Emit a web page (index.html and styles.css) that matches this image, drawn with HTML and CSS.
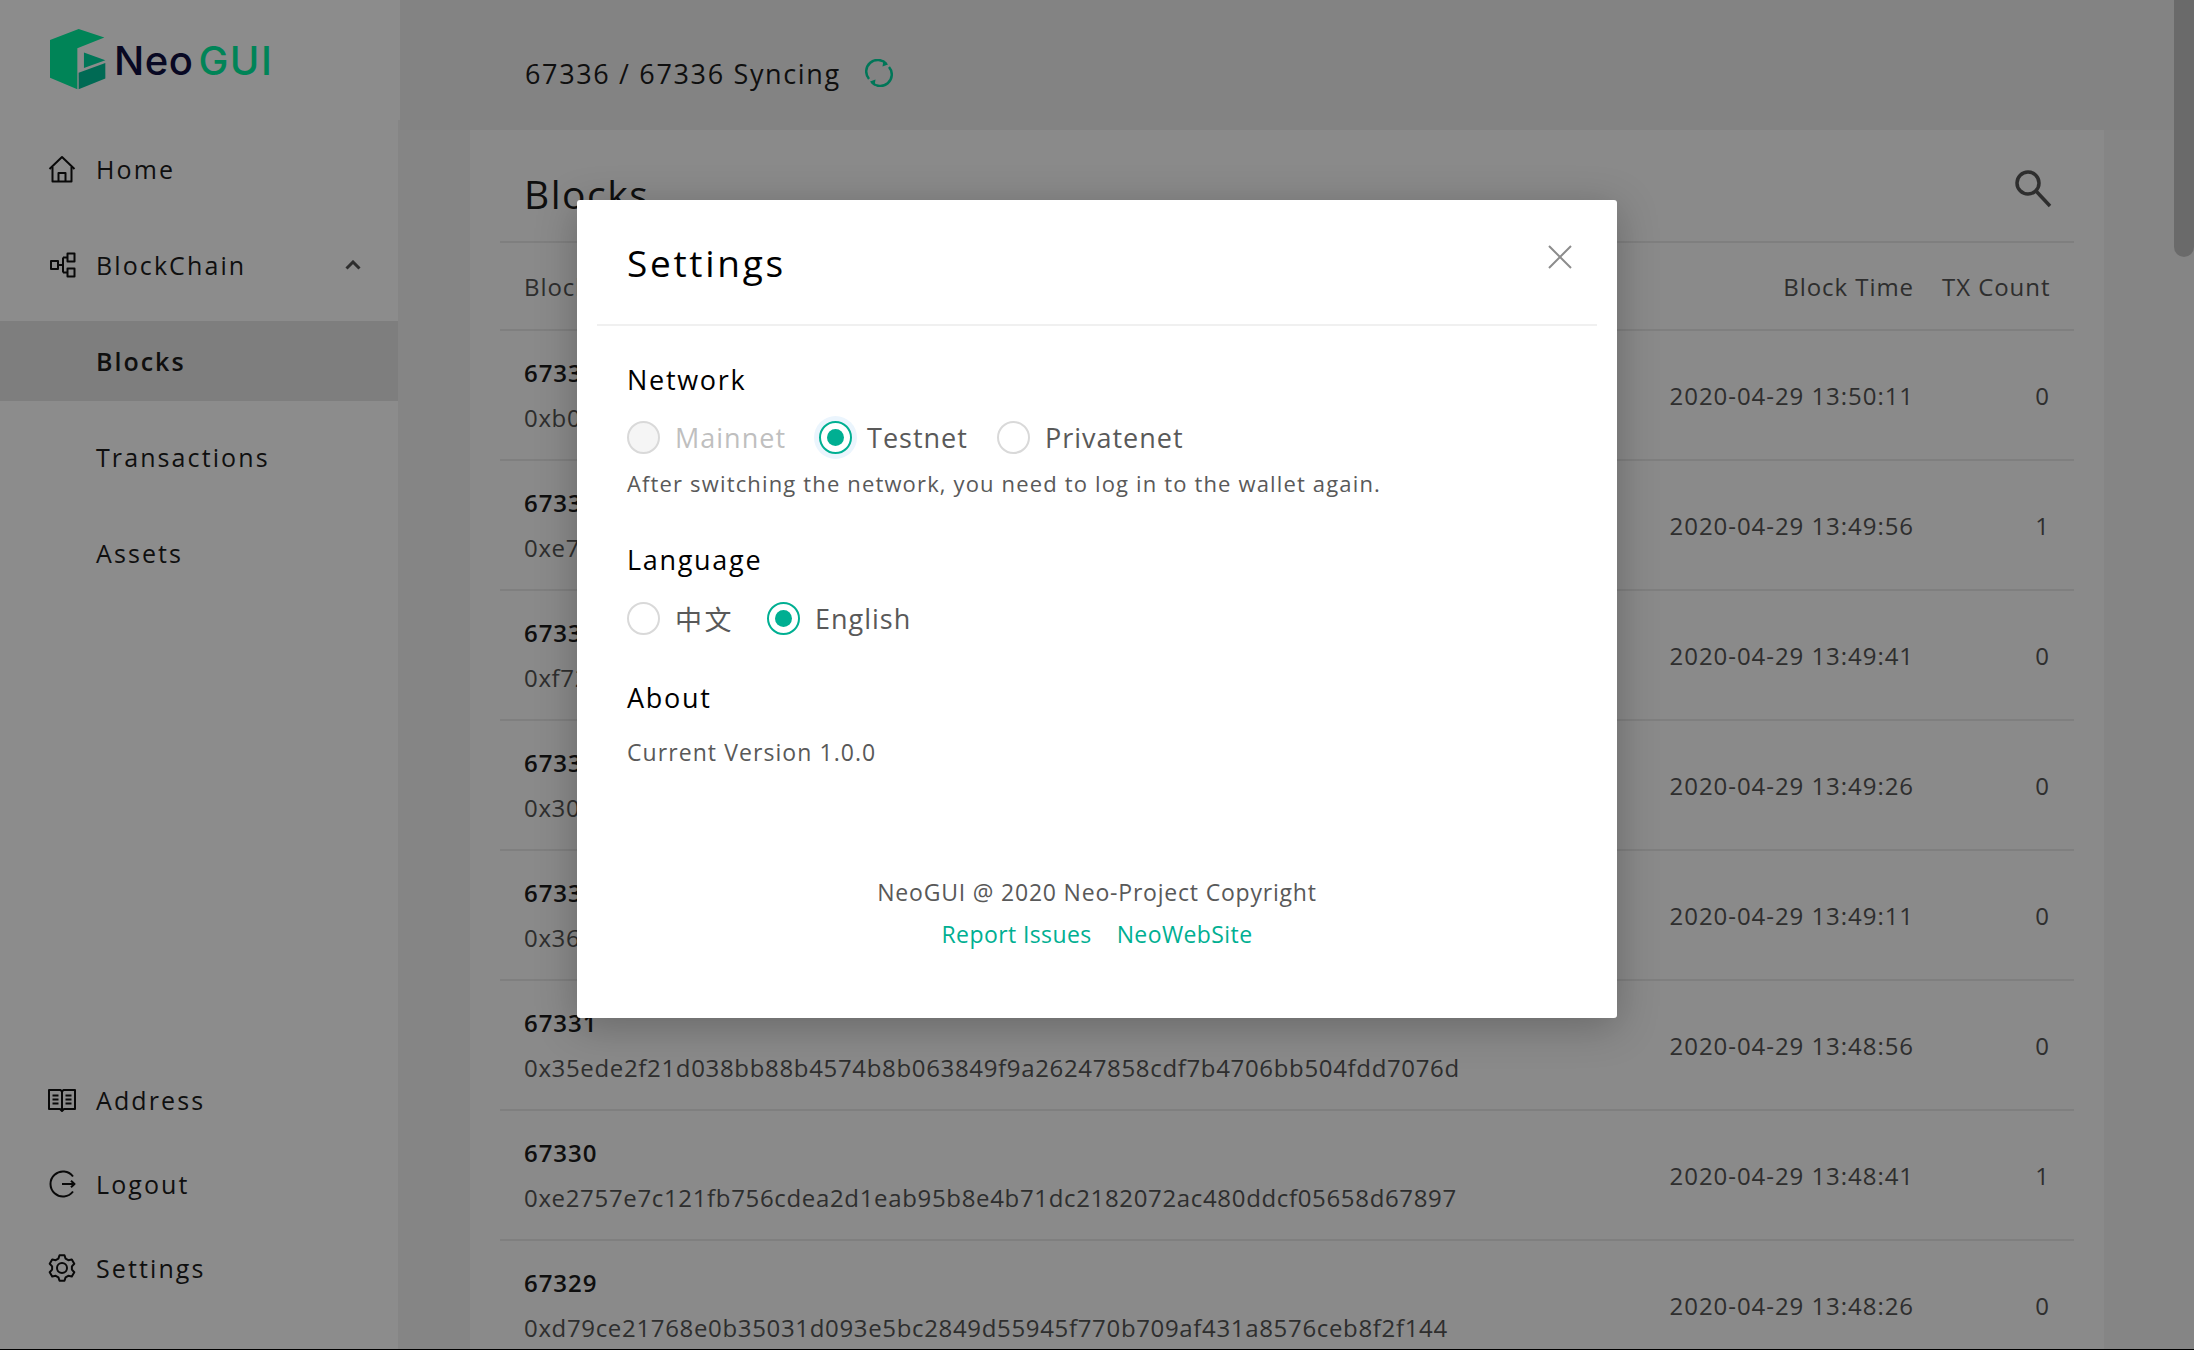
FILE: index.html
```html
<!DOCTYPE html>
<html lang="en">
<head>
  <meta charset="UTF-8">
  <title>NeoGUI</title>
  <link rel="stylesheet" href="styles.css">
</head>
<body>
  <div class="app">

    <div class="sidebar">
      <div class="logo">
        <svg class="logo-mark" viewBox="60 42 170 185">
          <path fill="#00f09f" d="M60 75 147 42 225 68 143 100V225L60 190Z"/>
          <path fill="#00d8a0" d="M163 113 228 137 163 160Z"/>
          <path fill="#00c29a" d="M147 175 228 145V192L147 225Z"/>
        </svg>
        <span class="logo-neo">Neo</span><span class="logo-gui">GUI</span>
      </div>

      <div class="menu">
        <div class="menu-item">
          <svg class="menu-icon" viewBox="0 0 28 28"><path d="M1.5 14 14 2 26.500 14"/><path d="M4.500 12V26.500H23.500V12M10.500 26.500V18H17.500V26.500"/></svg>
          Home
        </div>
        <div class="menu-item">
          <svg class="menu-icon" viewBox="0 0 28 28"><path d="M3 10h7v8H3zM19.500 2.500h7v8h-7zM19.500 17.500h7v8h-7zM10 14h5M15 6.500V21.500M15 6.500h4.500M15 21.500h4.500"/></svg>
          BlockChain
          <svg class="menu-arrow" viewBox="0 0 16 10"><path d="M1.500 8.500 8 2l6.500 6.500"/></svg>
        </div>
        <div class="menu-item sub active">Blocks</div>
        <div class="menu-item sub">Transactions</div>
        <div class="menu-item sub">Assets</div>
      </div>

      <div class="menu-bottom">
        <div class="menu-item">
          <svg class="menu-icon" viewBox="0 0 28 28"><path d="M1 4H12.500L14 5.500 15.500 4H27V23H16L14 25 12 23H1ZM14 5.500V24M4.500 9.500H10.500M4.500 13.500H10.500M4.500 17.500H10.500M17.500 9.500H23.500M17.500 13.500H23.500M17.500 17.500H23.500"/></svg>
          Address
        </div>
        <div class="menu-item">
          <svg class="menu-icon" viewBox="0 0 28 28"><path d="M25 6.500A12.500 12.500 0 1 0 25 21.500M14 14H26.500M23 10.800 26.500 14 23 17.200"/></svg>
          Logout
        </div>
        <div class="menu-item">
          <svg class="menu-icon" viewBox="-14 -14 28 28"><path d="M-3.580-9.340-2.480-12.760 2.480-12.760 3.580-9.340 6.290-7.770 9.810-8.530 12.290-4.230 9.880-1.560 9.880 1.560 12.290 4.230 9.810 8.530 6.290 7.770 3.580 9.340 2.480 12.760-2.480 12.760-3.580 9.340-6.290 7.770-9.810 8.530-12.290 4.230-9.880 1.560-9.880-1.560-12.290-4.230-9.810-8.530-6.290-7.770Z"/><circle r="5"/></svg>
          Settings
        </div>
      </div>
    </div>

    <div class="content">
      <div class="status">
        67336 / 67336 Syncing
        <svg class="sync-icon" viewBox="0 0 28 28"><path d="M4 20A11.500 11.500 0 0 1 21.500 5M24 8A11.500 11.500 0 0 1 6.500 23"/><path class="sync-head" d="M18.500 1 23 5.500 17.500 7.500ZM9.500 27 5 22.500 10.500 20.500Z"/></svg>
      </div>

      <div class="panel">
        <div class="panel-head">
          <div class="panel-title">Blocks</div>
          <svg class="search-icon" viewBox="0 0 38 38"><circle cx="14" cy="13" r="11"/><path d="M22 21 36 36"/></svg>
        </div>

        <div class="row row-head">
          <div>Block Hash</div>
          <div class="right">Block Time</div>
          <div class="right">TX Count</div>
        </div>

        <div class="row">
          <div><div class="height">67336</div><div class="hash">0xb0a1f46c2d8e7b35c90f14de62a7783b1c05e9d4f67a20bd38c1e5947fa6d012</div></div>
          <div class="right">2020-04-29 13:50:11</div>
          <div class="right">0</div>
        </div>
        <div class="row">
          <div><div class="height">67335</div><div class="hash">0xe7c4582f01bd96a3e17d40cf825b6e93a0d17c4b28f5e36d904ab17ce2f86d35</div></div>
          <div class="right">2020-04-29 13:49:56</div>
          <div class="right">1</div>
        </div>
        <div class="row">
          <div><div class="height">67334</div><div class="hash">0xf72d9b14ae605c83d7f1204eb96ca35d8e417f02c6ba93d15e80f7246cb1a9e3</div></div>
          <div class="right">2020-04-29 13:49:41</div>
          <div class="right">0</div>
        </div>
        <div class="row">
          <div><div class="height">67333</div><div class="hash">0x30e6c9a74b128fd50e37b6a1d492cf08e5137ad6b20f94c8e1d7356fa08b42c7</div></div>
          <div class="right">2020-04-29 13:49:26</div>
          <div class="right">0</div>
        </div>
        <div class="row">
          <div><div class="height">67332</div><div class="hash">0x36b81fd4027ce95a6d31f80be47c2a96d15e03fb78c4a2690de1b537f84c6d10</div></div>
          <div class="right">2020-04-29 13:49:11</div>
          <div class="right">0</div>
        </div>
        <div class="row">
          <div><div class="height">67331</div><div class="hash">0x35ede2f21d038bb88b4574b8b063849f9a26247858cdf7b4706bb504fdd7076d</div></div>
          <div class="right">2020-04-29 13:48:56</div>
          <div class="right">0</div>
        </div>
        <div class="row">
          <div><div class="height">67330</div><div class="hash">0xe2757e7c121fb756cdea2d1eab95b8e4b71dc2182072ac480ddcf05658d67897</div></div>
          <div class="right">2020-04-29 13:48:41</div>
          <div class="right">1</div>
        </div>
        <div class="row">
          <div><div class="height">67329</div><div class="hash">0xd79ce21768e0b35031d093e5bc2849d55945f770b709af431a8576ceb8f2f144</div></div>
          <div class="right">2020-04-29 13:48:26</div>
          <div class="right">0</div>
        </div>
      </div>
    </div>

    <div class="scrollbar"><div class="thumb"></div></div>

    <div class="mask"></div>

    <div class="modal">
      <div class="modal-head">
        <div class="modal-title">Settings</div>
        <svg class="close-icon" viewBox="0 0 24 24"><path d="M1 1 23 23M23 1 1 23"/></svg>
      </div>

      <div class="modal-body">
        <div class="section-title">Network</div>
        <div class="radios">
          <div class="radio disabled"><span class="dot"></span>Mainnet</div>
          <div class="radio checked focused"><span class="dot"></span>Testnet</div>
          <div class="radio"><span class="dot"></span>Privatenet</div>
        </div>
        <div class="note">After switching the network, you need to log in to the wallet again.</div>

        <div class="section-title language">Language</div>
        <div class="radios">
          <div class="radio"><span class="dot"></span><span class="cjk">中文</span></div>
          <div class="radio checked"><span class="dot"></span>English</div>
        </div>

        <div class="section-title about">About</div>
        <div class="version">Current Version 1.0.0</div>

        <div class="foot">
          <div>NeoGUI @ 2020 Neo-Project Copyright</div>
          <div class="links"><a>Report Issues</a><a>NeoWebSite</a></div>
        </div>
      </div>
    </div>

  </div>
</body>
</html>
```

FILE: styles.css
```css
*{
  margin: 0;
  padding: 0;
  box-sizing: border-box;
}

body{
  font-family: "Open Sans", "Noto Sans CJK SC", sans-serif;
  color: #1c1c1c;
  background: #000;
}

.app{
  position: relative;
  display: flex;
  width: 2194px;
  height: 1349px;
  overflow: hidden;
  background: #f2f2f2;
}

/* sidebar */
.sidebar{
  width: 400px;
  flex-shrink: 0;
  display: flex;
  flex-direction: column;
}

.logo{
  height: 120px;
  padding: 29px 0 0 50px;
  display: flex;
  align-items: flex-start;
  background: #ffffff;
  font: 500 40px Inter, sans-serif;
}
.logo-mark{
  width: 56px;
  height: 61px;
  margin-right: 8px;
}
.logo-neo{
  color: #100f40;
  margin-top: 7px;
  letter-spacing: 0.5px;
}
.logo-gui{
  color: #00f09f;
  margin: 7px 0 0 5px;
  letter-spacing: 1.5px;
}

.menu{
  width: 398px;
  flex: 1;
  background: #ffffff;
  padding-top: 9px;
}
.menu-bottom{
  width: 398px;
  background: #ffffff;
  padding-bottom: 39px;
}

.menu-item{
  height: 80px;
  margin-bottom: 16px;
  padding-left: 48px;
  display: flex;
  align-items: center;
  font-size: 25px;
  letter-spacing: 2.1px;
  color: #1c1c1c;
}
.menu-item.sub{
  padding-left: 96px;
}
.menu-item.active{
  background: #e6e6e6;
  font-weight: 600;
  letter-spacing: 2px;
}
.menu-bottom .menu-item{
  height: 84px;
  margin-bottom: 0;
}

.menu-icon{
  width: 28px;
  height: 28px;
  margin-right: 20px;
  fill: none;
  stroke: #111;
  stroke-width: 2;
  stroke-linejoin: round;
}
.menu-arrow{
  width: 16px;
  height: 10px;
  margin-left: auto;
  margin-right: 37px;
  fill: none;
  stroke: #555;
  stroke-width: 3;
}

/* main area */
.content{
  flex: 1;
  padding: 0 0 0 70px;
  min-width: 0;
}

.status{
  height: 130px;
  margin-left: -70px;
  padding: 16px 0 0 125px;
  display: flex;
  align-items: center;
  font-size: 27px;
  font-weight: 500;
  letter-spacing: 1.65px;
  background: #eeeeee;
}
.sync-icon{
  width: 28px;
  height: 28px;
  margin-left: 24px;
  fill: none;
  stroke: #00d8a0;
  stroke-width: 2.500;
}
.sync-head{
  fill: #00d8a0;
  stroke: none;
}

.panel{
  background: #fbfbfb;
  padding: 0 30px;
  width: 1634px;
}
.panel-head{
  height: 113px;
  border-bottom: 2px solid #e8e8e8;
  display: flex;
  justify-content: space-between;
  align-items: center;
  padding: 0 22px 0 24px;
}
.panel-title{
  margin-top: 16px;
  font-size: 39px;
  font-weight: 500;
  letter-spacing: 1.5px;
}
.search-icon{
  width: 38px;
  height: 38px;
  margin-top: 6px;
  fill: none;
  stroke: #555;
  stroke-width: 3.500;
}

.row{
  display: grid;
  grid-template-columns: 1fr 250px 108px;
  column-gap: 28px;
  align-items: center;
  height: 130px;
  padding: 0 24px;
  border-bottom: 2px solid #e8e8e8;
  font-size: 24px;
  letter-spacing: 0.95px;
  color: #555555;
}
.row-head{
  height: 88px;
}
.right{
  text-align: right;
  white-space: nowrap;
}
.height{
  font-weight: 600;
  color: #1c1c1c;
  line-height: 43px;
}
.hash{
  margin-top: 2px;
  line-height: 43px;
  letter-spacing: 0.66px;
  white-space: nowrap;
}

/* custom scrollbar */
.scrollbar{
  width: 20px;
  flex-shrink: 0;
}
.thumb{
  height: 257px;
  background: #c2c2c2;
  border-radius: 0 0 10px 10px;
}

.mask{
  position: absolute;
  inset: 0;
  background: rgba(0, 0, 0, 0.45);
}

/* settings dialog */
.modal{
  position: absolute;
  left: 577px;
  top: 200px;
  width: 1040px;
  height: 818px;
  padding: 0 20px;
  background: #ffffff;
  border-radius: 3px;
  box-shadow: 0 8px 40px rgba(0, 0, 0, 0.25);
}
.modal-head{
  height: 126px;
  padding: 0 25px 0 30px;
  border-bottom: 2px solid #f0f0f0;
  display: flex;
  justify-content: space-between;
  align-items: center;
}
.modal-title{
  font-size: 37px;
  font-weight: 500;
  letter-spacing: 2.7px;
  color: #000;
}
.close-icon{
  width: 24px;
  height: 24px;
  margin-bottom: 11px;
  fill: none;
  stroke: #8c8c8c;
  stroke-width: 2;
}

.modal-body{
  padding: 32px 30px 0;
}
.section-title{
  font-size: 27px;
  font-weight: 500;
  line-height: 44px;
  letter-spacing: 1.7px;
  color: #000;
}
.section-title.language{
  margin-top: 40px;
}
.section-title.about{
  margin-top: 36px;
}

.radios{
  display: flex;
  align-items: center;
  margin-top: 13px;
  height: 44px;
}
.section-title.language + .radios{
  margin-top: 14px;
}
.radio{
  display: flex;
  align-items: center;
  margin-right: 33px;
  font-size: 27px;
  letter-spacing: 1px;
  color: #595959;
}
.cjk{
  letter-spacing: 2.5px;
}
.dot{
  width: 33px;
  height: 33px;
  margin-right: 15px;
  border: 2px solid #d9d9d9;
  border-radius: 50%;
  display: flex;
  align-items: center;
  justify-content: center;
  background: #fff;
}
.radio.checked .dot{
  border-color: #00af92;
}
.radio.checked .dot::after{
  content: "";
  width: 17px;
  height: 17px;
  border-radius: 50%;
  background: #00af92;
}
.radio.focused{
  margin-right: 29px;
}
.radio.focused .dot{
  box-shadow: 0 0 0 5px #ebf5fd;
}
.radio.disabled{
  color: #bfbfbf;
}
.radio.disabled .dot{
  background: #f5f5f5;
}

.note{
  margin-top: 9px;
  font-size: 22px;
  letter-spacing: 1.15px;
  color: #595959;
}

.version{
  margin-top: 16px;
  font-size: 23px;
  letter-spacing: 1.07px;
  color: #595959;
}

.foot{
  margin-top: 108px;
  text-align: center;
  font-size: 23px;
  letter-spacing: 0.8px;
  color: #595959;
}
.links{
  margin-top: 10px;
  display: flex;
  justify-content: center;
  gap: 25px;
  letter-spacing: 0.4px;
  color: #00af92;
}
```
